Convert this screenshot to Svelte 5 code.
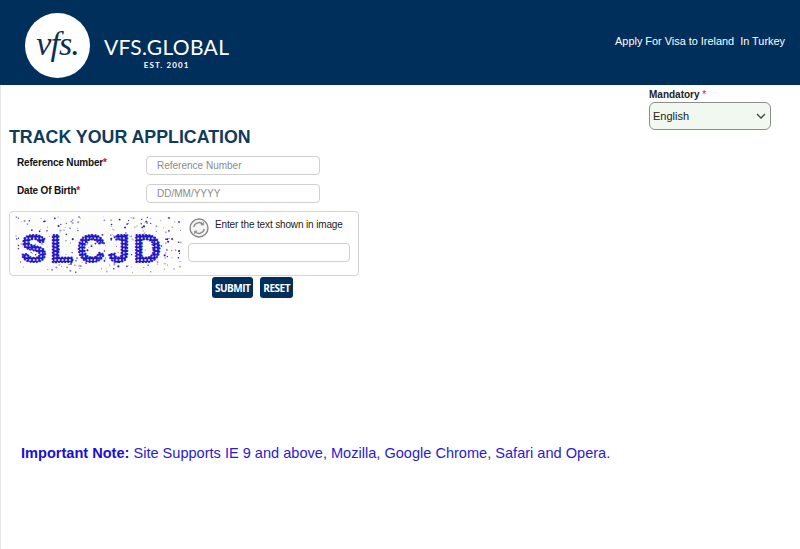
<script>
    // seeded noise so the captcha looks the same on every load
    let seed = 71
    function rnd() {
        seed = (seed * 16807) % 2147483647
        return seed / 2147483647
    }
    const tones = ["#2a22c8", "#8f8bd8", "#b9b9b0", "#1a1a9a"]
    const dots = Array.from({length: 270}, () => ({
        x: rnd() * 165,
        y: rnd() * 56,
        r: 0.4 + rnd() * 0.7,
        c: tones[Math.floor(rnd() * 4)]
    }))
</script>

<div class="page">
    <header>
        <div class="brand">
            <div class="circle"><span class="mono">vfs.</span></div>
            <div class="wordmark">
                <span class="name">VFS.GLOBAL</span>
                <span class="est">EST. 2001</span>
            </div>
        </div>
        <div class="apply">Apply For Visa to Ireland&nbsp; In Turkey</div>
    </header>

    <main>
        <div class="lang">
            <div class="mandatory">Mandatory <span class="star">*</span></div>
            <div class="select">
                <span>English</span>
                <svg width="10" height="6" viewBox="0 0 10 6"><path d="M1 1l4 4 4-4" fill="none" stroke="#444" stroke-width="1.3"/></svg>
            </div>
        </div>

        <h1>TRACK YOUR APPLICATION</h1>

        <div class="field">
            <label for="ref">Reference Number<span class="star">*</span></label>
            <input id="ref" placeholder="Reference Number" />
        </div>
        <div class="field">
            <label for="dob">Date Of Birth<span class="star">*</span></label>
            <input id="dob" placeholder="DD/MM/YYYY" />
        </div>

        <div class="captcha">
            <svg class="code" width="170" height="60" viewBox="0 0 170 60">
                <defs>
                    <pattern id="holes" width="3.6" height="3.6" patternUnits="userSpaceOnUse">
                        <rect width="3.6" height="3.6" fill="#1f17c4"/>
                        <circle cx="1.8" cy="1.8" r="1" fill="#fff"/>
                    </pattern>
                </defs>
                <rect width="170" height="60" fill="#fcfcfa"/>
                {#each dots as d}
                    <circle cx={d.x + 2} cy={d.y + 2} r={d.r} fill={d.c}/>
                {/each}
                <text x="77" y="47" text-anchor="middle" textLength="140" class="code-text" fill="url(#holes)">SLCJD</text>
            </svg>
            <div class="side">
                <div class="hint">
                    <svg width="20" height="20" viewBox="0 0 20 20">
                        <circle cx="10" cy="10" r="9" fill="#f4f4f4" stroke="#888" stroke-width="1.4"/>
                        <path d="M4.8 9a5.3 5.3 0 0 1 9.2-2.6M15.2 11a5.3 5.3 0 0 1-9.2 2.6" fill="none" stroke="#888" stroke-width="1.4"/>
                        <path d="M14.8 3.8v3.4h-3.4zM5.2 16.2v-3.4h3.4z" fill="#888"/>
                    </svg>
                    <span>Enter the text shown in image</span>
                </div>
                <input class="answer" />
            </div>
        </div>

        <div class="buttons">
            <button>SUBMIT</button>
            <button>RESET</button>
        </div>

        <p class="note"><b>Important Note:</b> Site Supports IE 9 and above, Mozilla, Google Chrome, Safari and Opera.</p>
    </main>
</div>

<style>
    :global(body) {
        background: #fff;
    }
    .page {
        width: 800px;
        height: 549px;
        overflow: hidden;
        font-family: "Liberation Sans", Arial, sans-serif;
    }
    header {
        height: 85px;
        background: #002f5c;
        display: flex;
        align-items: center;
        justify-content: space-between;
        padding: 0 15px 0 25px;
        box-sizing: border-box;
    }
    .brand {
        display: flex;
        align-items: center;
        gap: 14px;
        padding-top: 6px;
    }
    .circle {
        width: 65px;
        height: 65px;
        border-radius: 50%;
        background: #fff;
        display: flex;
        align-items: center;
        justify-content: center;
    }
    .mono {
        font-family: "Liberation Serif", serif;
        font-style: italic;
        font-size: 34px;
        color: #0b2e55;
        letter-spacing: -1px;
        line-height: 1;
        margin-top: -3px;
    }
    .wordmark {
        display: flex;
        flex-direction: column;
        align-items: center;
        color: #fff;
        font-family: Lato, sans-serif;
        margin-top: 14px;
    }
    .name {
        font-size: 21px;
        line-height: 24px;
        letter-spacing: 0.3px;
    }
    .est {
        font-size: 8px;
        font-weight: 700;
        letter-spacing: 1.1px;
        line-height: 12px;
    }
    .apply {
        color: #fff;
        font-size: 10.9px;
        margin-top: -3px;
    }
    main {
        height: 464px;
        border-left: 1px solid #e6e6e6;
        padding-left: 8px;
        box-sizing: border-box;
    }
    .lang {
        width: 122px;
        margin-left: 640px;
        padding-top: 3px;
    }
    .mandatory {
        font-size: 10px;
        font-weight: 700;
        line-height: 13px;
        color: #222;
    }
    .mandatory .star {
        font-weight: 400;
    }
    .star {
        color: #c4122f;
    }
    .select {
        height: 28px;
        margin-top: 1px;
        border: 1px solid #8d8d8d;
        border-radius: 6px;
        background: #f1f8f0;
        box-sizing: border-box;
        display: flex;
        align-items: center;
        justify-content: space-between;
        padding: 0 4px 0 3px;
        font-size: 11px;
        color: #222;
    }
    h1 {
        margin: -4px 0 0;
        font-size: 17.8px;
        line-height: 22px;
        font-weight: 700;
        color: #0f3a5c;
    }
    .field {
        display: flex;
        height: 28px;
        padding-left: 8px;
    }
    h1 + .field {
        margin-top: 8px;
    }
    label {
        width: 129px;
        font-size: 10px;
        letter-spacing: -0.18px;
        font-weight: 700;
        line-height: 14px;
        color: #111;
    }
    input {
        box-sizing: border-box;
        font-family: inherit;
        border: 1px solid #cfcfcf;
        border-radius: 4px;
        background: #fff;
        outline: none;
    }
    .field input {
        width: 174px;
        height: 19px;
        padding: 0 10px;
        font-size: 10px;
    }
    input::placeholder {
        color: #8a8a8a;
        opacity: 1;
    }
    .captcha {
        width: 350px;
        height: 65px;
        margin-top: -1px;
        border: 1px solid #d4d4d4;
        border-radius: 4px;
        box-sizing: border-box;
        display: flex;
        align-items: flex-start;
        padding: 3px 0 0 4px;
    }
    .code {
        flex: none;
    }
    .code-text {
        font-family: "Liberation Sans", Arial, sans-serif;
        font-size: 38px;
        font-weight: 700;
        stroke: #1f17c4;
        stroke-width: 2.2;
        stroke-linecap: round;
        stroke-dasharray: 0.1 3;
    }
    .side {
        margin-left: 4px;
        width: 163px;
    }
    .hint {
        display: flex;
        align-items: flex-start;
        gap: 6px;
        padding-left: 1px;
        font-size: 10px;
        letter-spacing: -0.14px;
        line-height: 14px;
        color: #222;
        height: 28px;
    }
    .hint svg {
        margin-top: 3px;
    }
    .hint span {
        margin-top: 3px;
    }
    .answer {
        display: block;
        width: 162px;
        height: 19px;
    }
    .buttons {
        display: flex;
        gap: 7px;
        margin-left: 203px;
        margin-top: 1px;
    }
    button {
        height: 21px;
        padding: 0 3px;
        background: #002f5c;
        color: #fff;
        border: none;
        border-radius: 3px;
        font-family: "Open Sans", sans-serif;
        font-size: 10px;
        letter-spacing: -0.5px;
        font-weight: 700;
    }
    .note {
        margin: 146px 0 0 12px;
        font-size: 14.57px;
        line-height: 18px;
        color: #2a1bd0;
    }
    .note b {
        color: #1710d8;
    }
</style>
